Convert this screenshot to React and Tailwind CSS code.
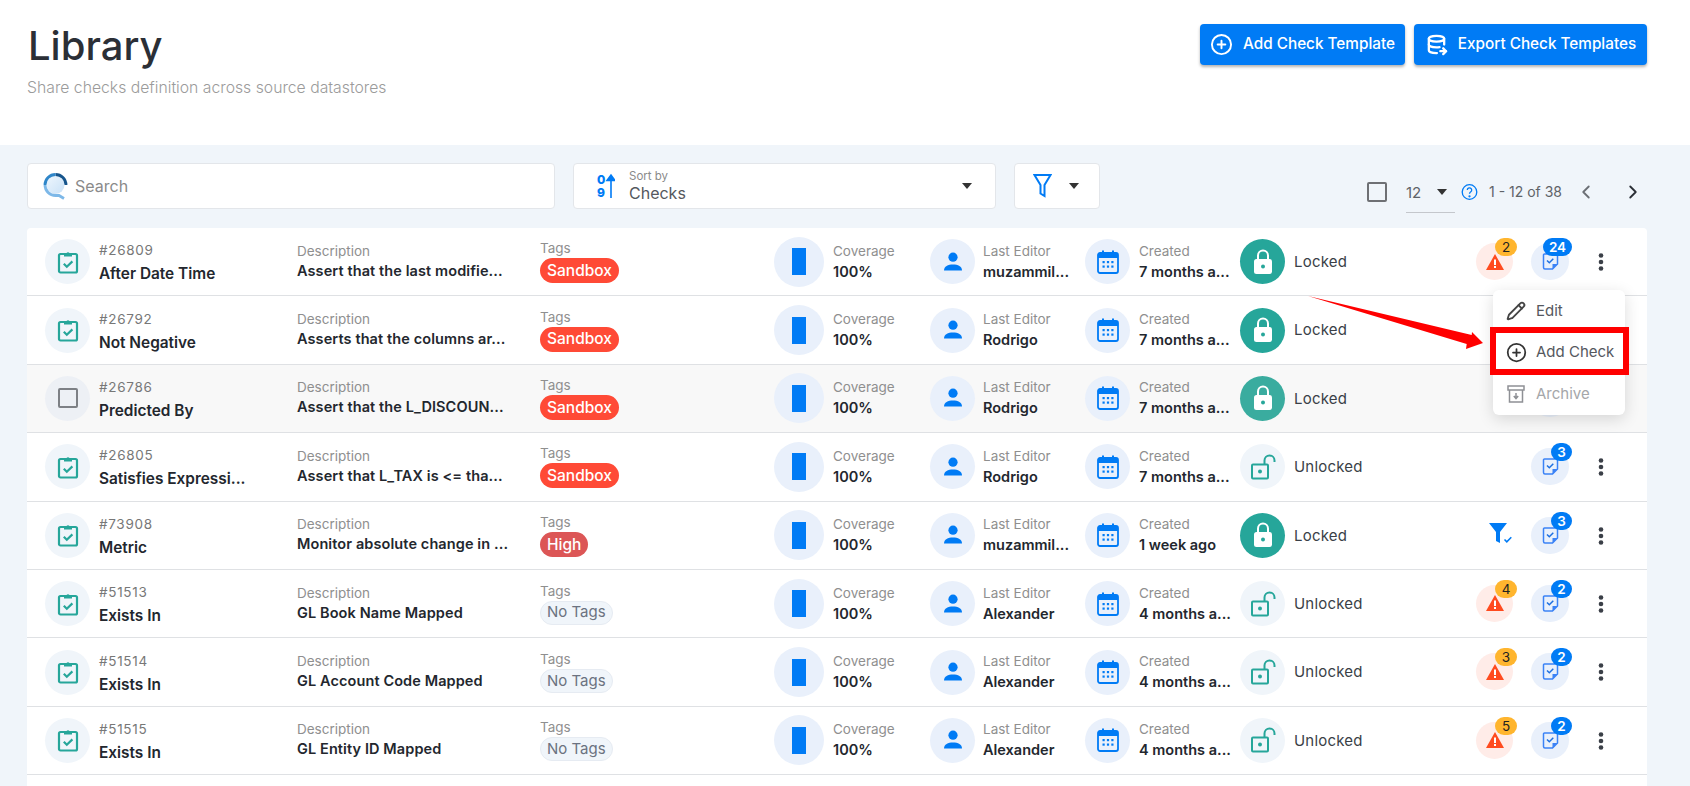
import { ChevronLeft, ChevronRight, CirclePlus, Pencil } from 'lucide-react';
import { TbDatabaseExport } from 'react-icons/tb';

const FONT = 'font-["Inter","Noto_Sans",sans-serif]';

// checks is left out on the two rows where the open menu covers the badge
const rows = [
    { id: '#26809', name: 'After Date Time', desc: 'Assert that the last modifie...', tag: 'Sandbox', editor: 'muzammil...', created: '7 months a...', locked: true, alerts: 2, checks: 24 },
    { id: '#26792', name: 'Not Negative', desc: 'Asserts that the columns ar...', tag: 'Sandbox', editor: 'Rodrigo', created: '7 months a...', locked: true },
    { id: '#26786', name: 'Predicted By', desc: 'Assert that the L_DISCOUN...', tag: 'Sandbox', editor: 'Rodrigo', created: '7 months a...', locked: true, hover: true },
    { id: '#26805', name: 'Satisfies Expressi...', desc: 'Assert that L_TAX is <= tha...', tag: 'Sandbox', editor: 'Rodrigo', created: '7 months a...', locked: false, checks: 3 },
    { id: '#73908', name: 'Metric', desc: 'Monitor absolute change in ...', tag: 'High', editor: 'muzammil...', created: '1 week ago', locked: true, filter: true, checks: 3 },
    { id: '#51513', name: 'Exists In', desc: 'GL Book Name Mapped', editor: 'Alexander', created: '4 months a...', locked: false, alerts: 4, checks: 2 },
    { id: '#51514', name: 'Exists In', desc: 'GL Account Code Mapped', editor: 'Alexander', created: '4 months a...', locked: false, alerts: 3, checks: 2 },
    { id: '#51515', name: 'Exists In', desc: 'GL Entity ID Mapped', editor: 'Alexander', created: '4 months a...', locked: false, alerts: 5, checks: 2 },
    { blank: true },
];

function ClipboardIcon() {
    return (
        <svg width="22" height="24" viewBox="0 0 22 24" fill="none">
            <rect x="2" y="4" width="18" height="18.5" rx="1.5" stroke="#26a69a" strokeWidth="2.2" />
            <path d="M7 6.500V3h2.500a1.800 1.800 0 0 1 3 0H15v3.500z" fill="#26a69a" />
            <path d="M6.800 13.800l3 3 5.600-5.400" stroke="#26a69a" strokeWidth="2.200" />
        </svg>
    );
}

function PersonIcon() {
    return (
        <svg width="20" height="20" viewBox="0 0 20 20" fill="#007bf5">
            <circle cx="10" cy="5.200" r="4.600" />
            <path d="M1 18.500c0-4.200 4-6 9-6s9 1.800 9 6z" />
        </svg>
    );
}

function CalendarIcon() {
    return (
        <svg width="22" height="24" viewBox="0 0 22 24" fill="none">
            <path d="M5 .5h2v3H5zM15 .5h2v3h-2z" fill="#007bf5" />
            <rect x="1" y="3" width="20" height="20" rx="2" stroke="#007bf5" strokeWidth="1.800" />
            <path d="M1 4.500a1.500 1.500 0 0 1 1.500-1.500h17a1.500 1.500 0 0 1 1.500 1.500V8H1z" fill="#007bf5" />
            <g fill="#007bf5">
                <rect x="5.500" y="11" width="2.200" height="2.200" />
                <rect x="9.900" y="11" width="2.200" height="2.200" />
                <rect x="14.300" y="11" width="2.200" height="2.200" />
                <rect x="5.500" y="15.500" width="2.200" height="2.200" />
                <rect x="9.900" y="15.500" width="2.200" height="2.200" />
                <rect x="14.300" y="15.500" width="2.200" height="2.200" />
            </g>
        </svg>
    );
}

function LockClosedIcon() {
    return (
        <svg width="20" height="26" viewBox="0 0 20 26" fill="none">
            <path d="M5 11V6.500a5 5 0 0 1 10 0V11" stroke="#fff" strokeWidth="2" />
            <rect x="1" y="10" width="18" height="15" rx="2.500" fill="#fff" />
            <circle cx="10" cy="17.500" r="2" fill="#26a69a" />
        </svg>
    );
}

function LockOpenIcon() {
    return (
        <svg width="26" height="26" viewBox="0 0 26 26" fill="none">
            <rect x="2" y="10.500" width="16" height="14" rx="1" stroke="#26a69a" strokeWidth="2" />
            <circle cx="10" cy="17.500" r="2" fill="#26a69a" />
            <path d="M14.500 10V6.500a5 5 0 0 1 10 0V8" stroke="#26a69a" strokeWidth="2" />
        </svg>
    );
}

function WarningIcon() {
    return (
        <svg width="18" height="16" viewBox="0 0 18 16">
            <path d="M9 0l9 16H0z" fill="#ff4b1f" />
            <rect x="8" y="5.500" width="2" height="5.500" fill="#fff" />
            <rect x="8" y="12" width="2" height="2" fill="#fff" />
        </svg>
    );
}

function NoteCheckIcon() {
    return (
        <svg width="17" height="17" viewBox="0 0 17 17" fill="none">
            <path d="M2.500 1h12a1 1 0 0 1 1 1v9l-5 5h-7.500a1.500 1.500 0 0 1-1.500-1.500V2a1 1 0 0 1 1-1z" stroke="#3b82f6" strokeWidth="1.500" />
            <path d="M10.500 16v-5h5z" fill="#3b82f6" />
            <path d="M5 7.500l2.300 2.200 4-4" stroke="#1d6fe0" strokeWidth="1.500" />
        </svg>
    );
}

function Kebab() {
    return (
        <svg width="6" height="18" viewBox="0 0 6 18" fill="#3a3f47">
            <circle cx="3" cy="2.500" r="2.300" />
            <circle cx="3" cy="9" r="2.300" />
            <circle cx="3" cy="15.500" r="2.300" />
        </svg>
    );
}

function SearchLogo() {
    return (
        <svg width="26" height="27" viewBox="0 0 26 27" fill="none">
            <defs>
                <linearGradient id="lens" x1="0" y1="0" x2="1" y2="1">
                    <stop offset="0" stopColor="#eef6fd" />
                    <stop offset="1" stopColor="#c9e1f7" />
                </linearGradient>
            </defs>
            <circle cx="12.500" cy="12" r="9" fill="url(#lens)" />
            <path d="M12.500 1.500A10.500 10.500 0 0 1 23 12" stroke="#16558c" strokeWidth="2.800" />
            <path d="M2 12A10.500 10.500 0 0 1 12.500 1.500" stroke="#2f86c9" strokeWidth="2.800" />
            <path d="M2 12a10.500 10.500 0 0 0 10.500 10.500H16l5 3" stroke="#7db8e8" strokeWidth="2.800" />
        </svg>
    );
}

function Caret({ className = '' }) {
    return <span className={`inline-block w-0 h-0 border-x-[5.500px] border-x-transparent border-t-[6px] border-t-[#333] ${className}`} />;
}

function Label({ children }) {
    return <p className="text-[13.500px] leading-[18px] text-[#8f8f8f] whitespace-nowrap">{children}</p>;
}

function Value({ children, className = '' }) {
    return <p className={`text-[14.500px] leading-[20px] font-semibold text-[#23272e] whitespace-nowrap ${className}`}>{children}</p>;
}

function Circle({ className = '', children }) {
    return <div className={`w-[45px] h-[45px] rounded-full flex items-center justify-center shrink-0 ${className}`}>{children}</div>;
}

function Tag({ tag }) {
    if (!tag) {
        return <span className="inline-flex items-center h-[24px] px-[6px] rounded-full bg-[#f0f5fa] border border-[#e6ebf2] text-[15px] text-[#6b7280]">No Tags</span>;
    }
    const colour = tag === 'High' ? 'bg-[#dc5656]' : 'bg-[#ff4a36]';
    return <span className={`inline-flex items-center h-[25px] px-[7px] rounded-full text-[15.500px] font-medium text-white ${colour}`}>{tag}</span>;
}

function Row({ row }) {
    if (row.blank) return <div className="h-[68.400px] bg-white" />;
    return (
        <div className={`relative h-[68.400px] flex items-center pl-[18px] border-b border-[#dfe1e4] ${row.hover ? 'bg-[#f8f8f8]' : 'bg-white'}`}>
            <div className="w-[252px] flex items-center shrink-0">
                <Circle className={row.hover ? 'bg-[#edf0f5]' : 'bg-[#f0f5fa]'}>
                    {row.hover ? <span className="w-[20px] h-[20px] rounded-[2px] border-2 border-[#7d8085]" /> : <ClipboardIcon />}
                </Circle>
                <div className="ml-[9px] pt-[2px]">
                    <p className="text-[13.500px] leading-[20px] tracking-[0.7px] text-[#777]">{row.id}</p>
                    <p className="text-[15.400px] leading-[23px] mt-[2px] font-semibold text-[#23272e] whitespace-nowrap">{row.name}</p>
                </div>
            </div>
            <div className="w-[243px] shrink-0">
                <div className="mt-[-1px]"><Label>Description</Label></div>
                <div className="mt-[1px]"><Value className="tracking-[0.1px]">{row.desc}</Value></div>
            </div>
            <div className="w-[234px] shrink-0">
                <div className="mt-[-1px]"><Label>Tags</Label></div>
                <div className="flex mt-[1px]"><Tag tag={row.tag} /></div>
            </div>
            <div className="w-[156px] shrink-0 flex items-center">
                <div className="w-[50px] h-[50px] rounded-full bg-[#e9f0fb] flex items-center justify-center shrink-0">
                    <span className="w-[14px] h-[27px] bg-[#007bf5]" />
                </div>
                <div className="ml-[9px]">
                    <Label>Coverage</Label>
                    <div className="mt-[2px]"><Value>100%</Value></div>
                </div>
            </div>
            <div className="w-[155px] shrink-0 flex items-center">
                <Circle className="bg-[#e9f0fb]"><PersonIcon /></Circle>
                <div className="ml-[8px]">
                    <Label>Last Editor</Label>
                    <div className="mt-[2px]"><Value>{row.editor}</Value></div>
                </div>
            </div>
            <div className="w-[155px] shrink-0 flex items-center">
                <Circle className="bg-[#e9f0fb]"><CalendarIcon /></Circle>
                <div className="ml-[9px]">
                    <Label>Created</Label>
                    <div className="mt-[2px]"><Value>{row.created}</Value></div>
                </div>
            </div>
            <div className="flex items-center">
                {row.locked ? (
                    <Circle className={row.hover ? 'bg-[#3aac9f]' : 'bg-[#26a69a]'}><LockClosedIcon /></Circle>
                ) : (
                    <Circle className="bg-[#f0f5fa]"><LockOpenIcon /></Circle>
                )}
                <span className="ml-[9px] mt-[1px] text-[15px] tracking-[0.2px] text-[#3a3f47]">{row.locked ? 'Locked' : 'Unlocked'}</span>
            </div>
            <div className="absolute left-[1449px] top-[15px] w-[37px] h-[37px]">
                {row.alerts && (
                    <div className="relative w-[37px] h-[37px] rounded-full bg-[#ffece8] flex items-center justify-center">
                        <WarningIcon />
                        <span className="absolute left-[19px] top-[-5px] w-[22px] h-[18px] rounded-full bg-[#ffb52e] text-[13.500px] leading-[18px] text-center text-[#222]">{row.alerts}</span>
                    </div>
                )}
                {row.filter && (
                    <svg className="absolute left-[13px] top-[6px]" width="25" height="22" viewBox="0 0 25 22">
                        <path d="M0 0h18l-7 9v11l-4-2V9z" fill="#007bf5" />
                        <path d="M15.500 16.500l2.300 2.300 4.500-4.500" stroke="#007bf5" strokeWidth="1.600" fill="none" />
                    </svg>
                )}
            </div>
            <div className="absolute left-[1504px] top-[15px] w-[38px] h-[37px] rounded-full bg-[#e9f0fb] flex items-center justify-center">
                <NoteCheckIcon />
                {row.checks && (
                    <span className={`absolute top-[-5px] h-[18px] rounded-full bg-[#007bf5] text-[13.500px] leading-[18px] text-center font-semibold text-white ${row.checks > 9 ? 'left-[12px] w-[29px]' : 'left-[20px] w-[21px]'}`}>{row.checks}</span>
                )}
            </div>
            <div className="absolute left-[1571px] top-[25px] flex"><Kebab /></div>
        </div>
    );
}

function RowMenu() {
    return (
        <div className="absolute left-[1493px] top-[290px] w-[132px] h-[125px] rounded-md bg-white shadow-[0_4px_16px_rgba(0,0,0,0.14)] text-[15px]">
            <div className="h-[41.500px] flex items-center pl-[13px] text-[#55585e]">
                <Pencil size={20} color="#444" strokeWidth={2.200} />
                <span className="ml-[10px]">Edit</span>
            </div>
            <div className="h-[41.500px] flex items-center pl-[13px] text-[#55585e]">
                <CirclePlus size={21} color="#333" />
                <span className="ml-[9px]">Add Check</span>
            </div>
            <div className="h-[41.500px] flex items-center pl-[14px] text-[#a5a7aa]">
                <svg width="18" height="18" viewBox="0 0 18 18" fill="none" stroke="#8e9095" strokeWidth="1.500">
                    <rect x="1" y="1" width="16" height="4" />
                    <path d="M2.500 5v12h13V5" />
                    <path d="M9 8v5M6.800 11L9 13.500 11.200 11" />
                </svg>
                <span className="ml-[11px]">Archive</span>
            </div>
        </div>
    );
}

export default function App() {
    return (
        <div className={`relative h-[786px] overflow-hidden bg-[#f0f5fa] ${FONT}`}>
            <header className="h-[145px] bg-white flex justify-between pl-[28px] pr-[43px]">
                <div className="pt-[21px]">
                    <h1 className="text-[40px] leading-[50px] font-medium text-[#2b2f36]">Library</h1>
                    <p className="mt-[6px] ml-[-1px] text-[15.750px] leading-[22px] font-light text-[#9b9b9b]">Share checks definition across source datastores</p>
                </div>
                <div className="pt-[24px] flex gap-[9px]">
                    <button type="button" className="h-[41px] w-[205px] flex items-center justify-center gap-[10px] rounded bg-[#007bf5] text-white text-[15.300px] font-medium shadow-[0_2px_3px_rgba(0,0,0,0.3)]">
                        <CirclePlus size={23} />
                        Add Check Template
                    </button>
                    <button type="button" className="h-[41px] w-[233px] flex items-center justify-center gap-[10px] rounded bg-[#007bf5] text-white text-[15.300px] font-medium shadow-[0_2px_3px_rgba(0,0,0,0.3)]">
                        <TbDatabaseExport size={23} strokeWidth={2.400} />
                        Export Check Templates
                    </button>
                </div>
            </header>

            <main className="pl-[27px] pr-[43px] pt-[18px]">
                <div className="flex items-start">
                    <div className="w-[528px] h-[46px] flex items-center pl-[15px] rounded bg-white border border-[#e3e6ea]">
                        <SearchLogo />
                        <span className="ml-[6px] text-[16px] text-[#8a8a8a]">Search</span>
                    </div>
                    <div className="ml-[18px] w-[423px] h-[46px] flex items-center pl-[23px] rounded bg-white border border-[#e3e6ea]">
                        <div className="flex items-center">
                            <svg width="18" height="26" viewBox="0 0 18 26">
                                <text x="0" y="11" fontSize="12" fontWeight="800" fill="#007bf5" fontFamily="Inter">0</text>
                                <text x="0" y="24" fontSize="12" fontWeight="800" fill="#007bf5" fontFamily="Inter">9</text>
                                <path d="M14 25V3M10 7.500L14 2l4 5.500z" stroke="#007bf5" strokeWidth="1.600" fill="#007bf5" />
                            </svg>
                        </div>
                        <div className="ml-[14px]">
                            <p className="text-[11.500px] leading-[13px] text-[#8a8a8a] mt-[1px]">Sort by</p>
                            <p className="text-[16px] leading-[20px] text-[#55585e]">Checks</p>
                        </div>
                        <Caret className="ml-auto mr-[23px]" />
                    </div>
                    <div className="ml-[18px] w-[86px] h-[46px] flex items-center pl-[18px] rounded bg-white border border-[#e3e6ea]">
                        <svg width="19" height="26" viewBox="0 0 19 26" fill="none" stroke="#007bf5" strokeWidth="2">
                            <path d="M1.500 2h16l-6 10v11l-4-2.500V12z" />
                        </svg>
                        <Caret className="ml-[17px]" />
                    </div>
                    <div className="ml-[267px] pt-[11px] flex items-center text-[14px] text-[#5f6368] h-[46px]">
                        <span className="w-[20px] h-[20px] rounded-[2px] border-2 border-[#6e7074]" />
                        <div className="ml-[19px] w-[49px] h-[36px] pt-[5px] flex items-start justify-between pr-[8px] mt-[6px] border-b border-[#c4c7cc] text-[15px]">
                            <span>12</span>
                            <Caret className="mt-[7px]" />
                        </div>
                        <svg className="ml-[6px]" width="17" height="20" viewBox="0 0 16 20" fill="none" stroke="#007bf5" strokeWidth="1.300">
                            <circle cx="8" cy="10" r="7.300" />
                            <path d="M5.800 8a2.200 2.200 0 1 1 3.500 1.800c-.8.6-1.300 1-1.300 2" />
                            <circle cx="8" cy="14.300" r=".5" />
                        </svg>
                        <span className="ml-[11px] whitespace-nowrap">1 - 12 of 38</span>
                        <ChevronLeft className="ml-[13px]" size={22} color="#6b6f75" />
                        <ChevronRight className="ml-[25px]" size={22} color="#2b2f36" />
                    </div>
                </div>

                <div className="mt-[19px] rounded-t overflow-hidden">
                    {rows.map((row, i) => <Row key={i} row={row} />)}
                </div>
            </main>

            <RowMenu />
            <div className="absolute left-[1490px] top-[327px] w-[139px] h-[48px] border-[6px] border-[#ff0000]" />
            <svg className="absolute left-[1305px] top-[294px]" width="182" height="60" viewBox="0 0 182 60">
                <path d="M3 2L166.700 41 167 38 178 49 161 55 161.700 50z" fill="#ff0000" />
            </svg>
        </div>
    );
}
